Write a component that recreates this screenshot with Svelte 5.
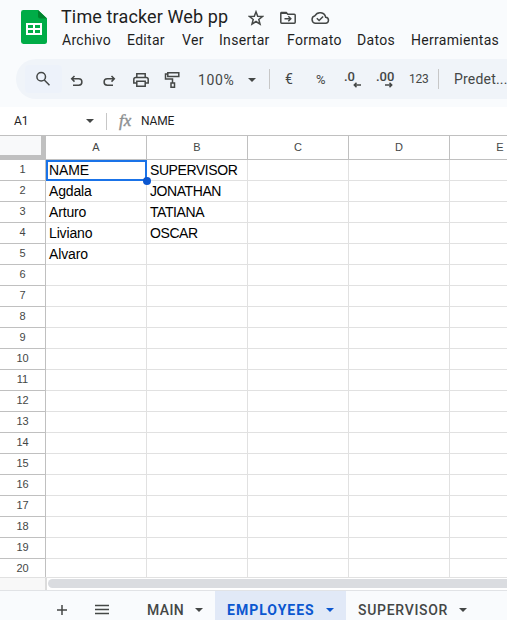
<script>
  const menus = [
    ['Archivo', 65], ['Editar', 55], ['Ver', 37], ['Insertar', 68],
    ['Formato', 70], ['Datos', 54], ['Herramientas', 96]
  ];
  const cols = ['A', 'B', 'C', 'D', 'E'];
  const data = [
    ['NAME', 'SUPERVISOR'], ['Agdala', 'JONATHAN'], ['Arturo', 'TATIANA'],
    ['Liviano', 'OSCAR'], ['Alvaro', '']
  ];
  const rows = Array.from({ length: 20 }, (_, i) => i);
</script>

{#snippet caret()}
  <svg class="caret" width="8" height="4" viewBox="0 0 8 4"><path d="M0 0h8L4 4z" fill="currentColor" /></svg>
{/snippet}

<div class="app">
  <header>
    <svg class="logo" width="26" height="34" viewBox="0 0 26 34">
      <path d="M2.4 0H17l9 8.5v23a2.4 2.4 0 0 1-2.4 2.5H2.4A2.4 2.4 0 0 1 0 31.600V2.400A2.400 2.400 0 0 1 2.400 0z" fill="#00ac47" />
      <path d="M17 0l9 8.500h-6.800A2.200 2.200 0 0 1 17 6.300z" fill="#00832d" />
      <path fill-rule="evenodd" d="M5 13h16v12H5zM7 15v3h5v-3zM14 15v3h5v-3zM7 20v3h5v-3zM14 20v3h5v-3z" fill="#fff" />
    </svg>
    <div class="head">
      <div class="title-row">
        <span class="title">Time tracker Web pp</span>
        <svg width="16" height="16" viewBox="0 0 16 16"><path d="M8 1.800l1.700 4.400 4.700.3-3.600 3 1.200 4.600L8 11.500l-4 2.600 1.200-4.600-3.600-3 4.700-.3z" /></svg>
        <svg width="18" height="16" viewBox="0 0 18 16"><path d="M1.800 3v9.300q0 .9.900.9h12.600q.9 0 .9-.9V5.200q0-.9-.9-.9H8.800L7.200 2.500H2.300z" /><path d="M2 3.300h6M5.500 8.800h6M9.300 6.300l2.500 2.500-2.500 2.500" /></svg>
        <svg width="20" height="16" viewBox="0 0 20 16"><path d="M5.200 13.300h10a3 3 0 0 0 .5-6A5.800 5.800 0 0 0 5 5.700a3.900 3.900 0 0 0 .2 7.600z" /><path d="M6.800 8.300l2.300 2.200 4-4.100" /></svg>
      </div>
      <nav>
        {#each menus as [name, width]}<span style="width: {width}px">{name}</span>{/each}
      </nav>
    </div>
  </header>

  <div class="toolbar">
    <span class="tool search"><svg width="16" height="16" viewBox="0 0 16 16"><circle cx="6.200" cy="5.800" r="4.300" /><path d="M9.300 9l5.200 5.200" /></svg></span>
    <span class="tool undo"><svg width="16" height="16" viewBox="0 0 16 16"><path d="M5.500 2L2.700 4.800l2.800 2.800M3 4.800h6.700a3.200 3.200 0 0 1 0 6.400H4" /></svg></span>
    <span class="tool redo"><svg width="16" height="16" viewBox="0 0 16 16"><path d="M10.500 2l2.800 2.800-2.800 2.800M13 4.800H6.300a3.200 3.200 0 0 0 0 6.400H12" /></svg></span>
    <span class="tool print"><svg width="18" height="18" viewBox="0 0 18 18"><path d="M4.800 6V2.800h8.400V6M4.800 12H1.800V8.500q0-2 2-2h10.400q2 0 2 2V12h-3M4.800 10.300h8.400v5H4.800z" /></svg></span>
    <span class="tool paint"><svg width="18" height="18" viewBox="0 0 18 18"><path d="M4.800 1.800h11v3.600h-11zM4.800 3H2.500v5h7v4M8 12h3.500v4.300H8z" /></svg></span>
    <span class="zoom">100%</span>
    <span class="zoom-caret">{@render caret()}</span>
    <i class="sep"></i>
    <span class="euro">€</span>
    <span class="percent">%</span>
    <span class="decimal less">.0<svg width="8" height="6" viewBox="0 0 8 6"><path d="M8 3H1.500M3.500 .8L1.300 3l2.200 2.200" /></svg></span>
    <span class="decimal more">.00<svg width="8" height="6" viewBox="0 0 8 6"><path d="M0 3h6.500M4.500 .8L6.700 3 4.500 5.200" /></svg></span>
    <span class="num">123</span>
    <i class="sep second"></i>
    <span class="font">Predet...</span>
  </div>

  <div class="formula">
    <span class="ref">A1</span>
    {@render caret()}
    <i></i>
    <span class="fx">fx</span>
    <span class="value">NAME</span>
  </div>

  <div class="sheet">
    <div class="row heading">
      <span class="corner"></span>
      {#each cols as col}<span class="col">{col}</span>{/each}
    </div>
    {#each rows as r}
      <div class="row">
        <span class="index">{r + 1}</span>
        {#each cols as _, c}
          <span class="cell">{data[r]?.[c] ?? ''}{#if r === 0 && c === 0}<b class="selection"></b>{/if}</span>
        {/each}
      </div>
    {/each}
  </div>
  <div class="scroll"><span class="stub"></span><span class="thumb"></span></div>

  <footer>
    <svg class="plus" width="12" height="12" viewBox="0 0 12 12"><path d="M6 1v10M1 6h10" /></svg>
    <svg class="list" width="14" height="12" viewBox="0 0 14 12"><path d="M0 1.500h14M0 5.500h14M0 9.500h14" /></svg>
    <span class="tab main"><span>MAIN</span>{@render caret()}</span>
    <span class="tab active"><span>EMPLOYEES</span>{@render caret()}</span>
    <span class="tab last"><span>SUPERVISOR</span>{@render caret()}</span>
  </footer>
</div>

<style>
  :global(body) { margin: 0; overflow: hidden; }
  .app { width: 507px; height: 620px; overflow: hidden; background: #f9fbfd; font-family: Roboto, "Liberation Sans", sans-serif; color: #1f1f1f; }
  .app * { box-sizing: border-box; }
  svg { display: block; flex: none; fill: none; stroke: #444746; stroke-width: 1.5; }
  .logo, .caret { stroke: none; }
  span { white-space: nowrap; flex: none; }
  header { height: 59px; display: flex; padding-left: 21px; }
  .logo { margin-top: 10px; }
  .head { margin-left: 14px; }
  .title-row { height: 36px; display: flex; align-items: center; }
  .title { font-size: 18px; width: 187px; letter-spacing: .13px; margin-top: -3px; }
  .title-row svg:nth-of-type(2) { margin-left: 15px; }
  .title-row svg:nth-of-type(3) { margin-left: 13px; }
  nav { display: flex; margin-left: 1px; font-size: 14px; line-height: 18px; margin-top: -5px; letter-spacing: .3px; }
  .toolbar { height: 40px; margin-left: 16px; background: #f0f4f9; border-radius: 20px 0 0 20px; display: flex; align-items: center; padding-left: 9px; color: #444746; }
  .tool { display: flex; justify-content: center; }
  .search { width: 37px; height: 28px; background: #edf2fa; align-items: center; border-radius: 4px; padding-right: 2px; }
  .undo { width: 31px; padding: 6px 1px 0 0; }
  .redo { width: 32px; padding: 6px 1px 0 0; }
  .print { width: 32px; padding-top: 2px; }
  .paint { width: 31px; padding: 1px 2px 0 0; }
  .zoom { font-size: 14px; letter-spacing: .65px; width: 50px; margin-left: 10px; padding-top: 2px; }
  .zoom-caret { width: 21px; padding-top: 2px; }
  .sep { width: 1px; height: 20px; background: #c7c7c7; flex: none; }
  .euro { font-size: 14px; margin-left: 15px; width: 31px; }
  .percent { font-size: 13px; width: 28px; }
  .decimal { position: relative; font-size: 13px; font-weight: 500; width: 32px; height: 20px; line-height: 16px; }
  .decimal svg { position: absolute; left: 9px; top: 13px; }
  .more svg { left: 9px; }
  .num { font-size: 12px; letter-spacing: -.2px; margin-left: 1px; width: 29px; }
  .font { font-size: 14px; margin-left: 15px; letter-spacing: .2px; }
  .formula { height: 28px; margin-top: 8px; background: #fff; display: flex; align-items: center; padding-left: 14px; font-size: 12px; color: #444746; }
  .ref { width: 72px; color: #1f1f1f; }
  .formula i { width: 1px; height: 17px; background: #c7c7c7; margin-left: 12px; }
  .fx { width: 22px; margin-left: 12px; font: italic 17px "Liberation Serif", serif; -webkit-text-stroke: .4px #8c8f91; color: #8c8f91; }
  .value { color: #1f1f1f; letter-spacing: -.15px; }
  .sheet { height: 443px; border-top: 1px solid #c0c0c0; border-bottom: 1px solid #e1e1e1; background: #fff; overflow: hidden; font-family: "Liberation Sans", Arial, sans-serif; }
  .row { display: flex; height: 21px; width: 551px; }
  .heading { height: 24px; }
  .corner { width: 46px; height: 24px; background: #f8f9fa; border: solid #c0c0c0; border-width: 0 5px 5px 0; }
  .col { width: 101px; border-right: 1px solid #c0c0c0; border-bottom: 1px solid #c0c0c0; text-align: center; font-size: 11px; line-height: 23px; color: #444746; }
  .index { width: 46px; border-right: 1px solid #c0c0c0; border-bottom: 1px solid #c0c0c0; text-align: center; font-size: 11px; line-height: 19px; color: #444746; }
  .cell { position: relative; width: 101px; border-right: 1px solid #e1e1e1; border-bottom: 1px solid #e1e1e1; padding-left: 3px; font-size: 14px; letter-spacing: -.42px; line-height: 21px; color: #000; }
  .cell:nth-child(2) { letter-spacing: -.15px; }
  .selection { position: absolute; z-index: 2; left: 0; top: 0; width: 101px; height: 21px; border: 2px solid #1a73e8; }
  .selection::after { content: ""; position: absolute; right: -6px; bottom: -6px; width: 8px; height: 8px; border-radius: 50%; background: #0b57d0; }
  .scroll { height: 12px; background: #fff; display: flex; }
  .stub { width: 47px; background: #f8f8f8; border-right: 2px solid #dcdcdc; }
  .thumb { height: 9px; margin: 1px 0 0 1px; flex: 1; border-radius: 5px 0 0 5px; background: #dadce0; }
  footer { height: 30px; border-top: 1px solid #e1e3e6; display: flex; padding-left: 56px; color: #444746; font-size: 14px; }
  .plus { margin-top: 13px; }
  .list { margin: 13px 0 0 27px; }
  .tab { display: flex; align-items: center; height: 38px; letter-spacing: .7px; font-weight: 500; }
  .main { margin-left: 38px; width: 68px; letter-spacing: .4px; }
  .main > span { width: 48px; }
  .active { width: 131px; padding-left: 12px; background: #e1e9f7; color: #0b57d0; font-weight: 700; letter-spacing: 1px; }
  .active > span { width: 99px; }
  .last { padding-left: 12px; }
  .last > span { width: 101px; }
</style>
